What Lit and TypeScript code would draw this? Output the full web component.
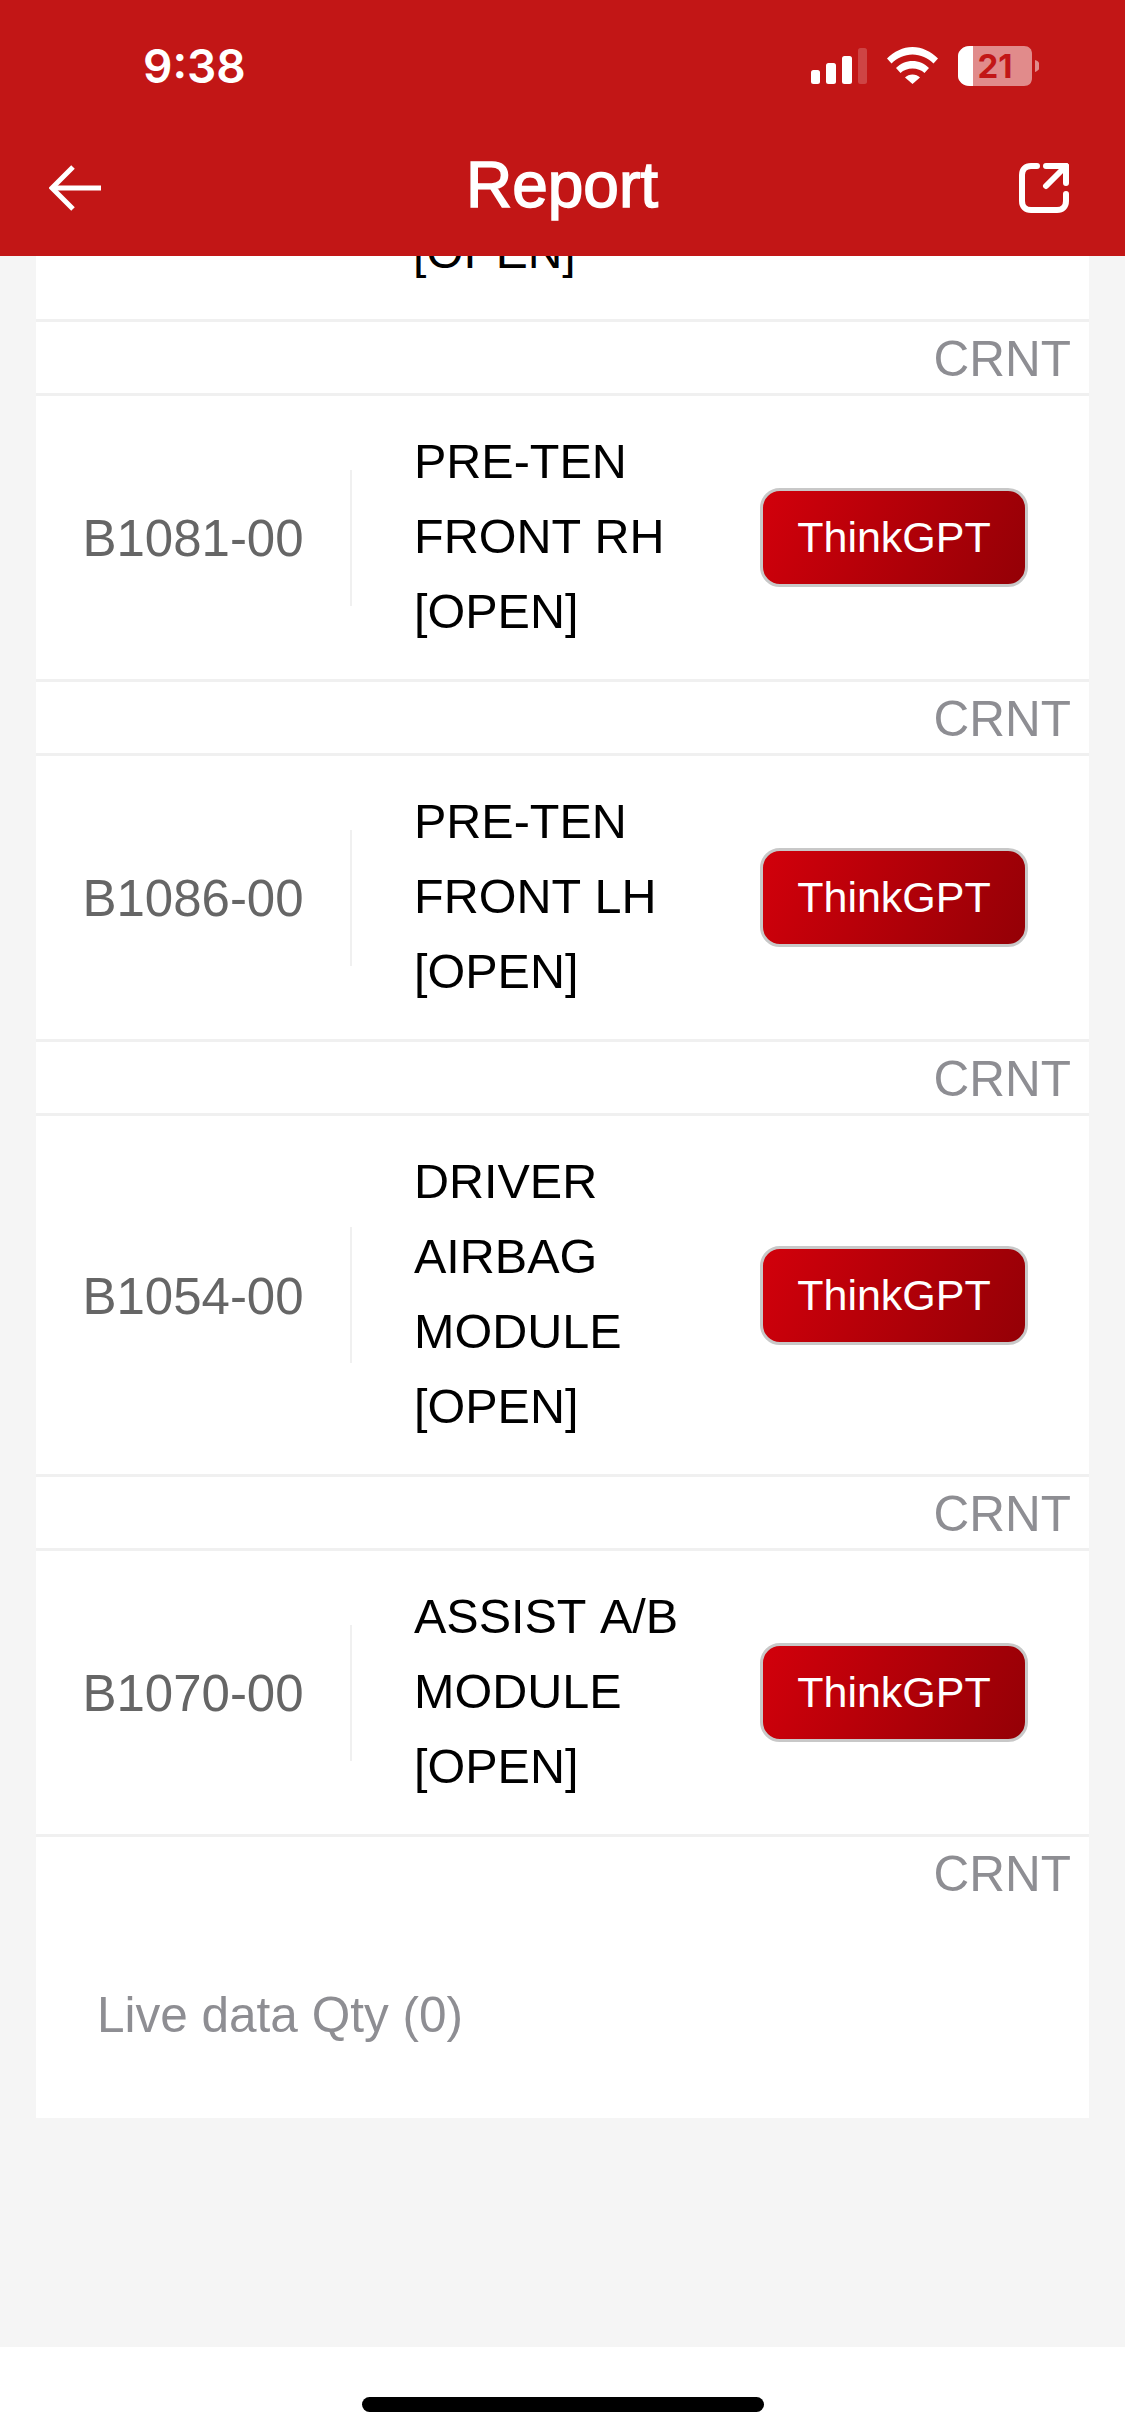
import { LitElement, html, css } from "lit";
import { customElement } from "lit/decorators.js";

const rows = [
  { code: "B1081-00", lines: ["PRE-TEN", "FRONT RH", "[OPEN]"] },
  { code: "B1086-00", lines: ["PRE-TEN", "FRONT LH", "[OPEN]"] },
  { code: "B1054-00", lines: ["DRIVER", "AIRBAG", "MODULE", "[OPEN]"] },
  { code: "B1070-00", lines: ["ASSIST A/B", "MODULE", "[OPEN]"] },
];

@customElement("app-root")
export class AppRoot extends LitElement {
  static styles = css`
    :host {
      display: flex;
      flex-direction: column;
      width: 1125px;
      height: 2436px;
      overflow: hidden;
      background: #f5f5f5;
      font-family: "Liberation Sans", Arial, sans-serif;
    }
    .header {
      flex: none;
      height: 256px;
      background: #c21616;
      color: #fff;
      display: flex;
      flex-direction: column;
    }
    .status {
      height: 132px;
      display: flex;
      align-items: center;
      justify-content: space-between;
      padding: 0 86px 0 143px;
    }
    .time {
      font-family: Inter, sans-serif;
      font-weight: 600;
      font-size: 46px;
      line-height: 1;
    }
    .status svg { display: block; }
    .batt-num {
      font-family: Inter, sans-serif;
      font-weight: 700;
      font-size: 33px;
    }
    .nav {
      height: 112px;
      display: grid;
      grid-template-columns: 1fr auto 1fr;
      align-items: center;
      padding: 0 56px 0 49px;
    }
    .nav svg { display: block; }
    .nav .share { justify-self: end; }
    .title {
      font-size: 64px;
      line-height: 1;
      font-weight: 400;
      margin: 0 0 6px 6px;
      -webkit-text-stroke: 1.5px #fff;
    }
    .main {
      flex: 1;
      min-height: 0;
      overflow: hidden;
      padding: 0 36px;
    }
    .card { background: #fff; }
    .cut {
      height: 63px;
      overflow: hidden;
      display: flex;
      flex-direction: column;
      justify-content: flex-end;
      padding-left: 377px;
      padding-bottom: 30px;
      box-sizing: border-box;
      font-size: 48px;
      line-height: 75px;
      color: #000;
    }
    .cut span { flex: none; }
    .sep { height: 3px; background: #f0f0f0; }
    .crnt {
      box-sizing: border-box;
      height: 71px;
      display: flex;
      align-items: center;
      justify-content: flex-end;
      padding: 2px 18px 0 0;
      font-size: 49.5px;
      color: #8e8e93;
    }
    .row {
      display: flex;
      align-items: center;
      padding: 29px 0;
    }
    .code {
      width: 314px;
      flex: none;
      box-sizing: border-box;
      padding-top: 2px;
      text-align: center;
      font-size: 51px;
      color: #666;
    }
    .vline {
      flex: none;
      width: 2px;
      height: 136px;
      background: #f0f0f0;
    }
    .desc {
      width: 346px;
      flex: none;
      margin: -1.5px 0 1.5px 62px;
      font-size: 48.5px;
      font-kerning: none;
      line-height: 75px;
      color: #000;
    }
    .btn {
      flex: none;
      box-sizing: border-box;
      width: 268px;
      height: 99px;
      border: 3px solid #c8c8c8;
      border-radius: 20px;
      background: linear-gradient(115deg, #d2000b, #940006);
      color: #fff;
      font-family: inherit;
      font-size: 43px;
      padding: 0;
      display: flex;
      align-items: center;
      justify-content: center;
    }
    .live {
      box-sizing: border-box;
      height: 210px;
      display: flex;
      align-items: center;
      padding: 2px 0 0 61px;
      font-size: 49.5px;
      color: #8e8e93;
    }
    .footer {
      flex: none;
      height: 89px;
      background: #fff;
      display: flex;
      justify-content: center;
      padding-top: 50px;
      box-sizing: border-box;
    }
    .home {
      width: 402px;
      height: 15px;
      border-radius: 8px;
      background: #000;
    }
  `;

  render() {
    return html`
      <div class="header">
        <div class="status">
          <span class="time">9:38</span>
          <svg width="228" height="40" viewBox="811 46 228 40">
            <g fill="#fff">
              <rect x="811" y="70" width="9" height="14" rx="2.5" />
              <rect x="826" y="63" width="10" height="21" rx="2.5" />
              <rect x="842" y="56" width="10" height="28" rx="2.5" />
              <rect x="858" y="48" width="9" height="36" rx="2.5" opacity=".2" />
              <path d="M887 58.5C894 51.5 903 47 912.5 47S931 51.5 938 58.5L933.5 63.5C928 58 920.5 54.5 912.5 54.5S897 58 891.5 63.5Z" />
              <path d="M896 68C900.500 63.500 906.300 61 912.500 61S924.500 63.500 929 68L924.500 73C921.500 70 917 68.500 912.500 68.500S903.500 70 900.500 73Z" />
              <path d="M905 77.500C907 75.500 909.500 74.500 912.500 74.500S918 75.500 920 77.500L912.500 84Z" />
              <path d="M970 46H1024C1029 46 1032 49 1032 54V78C1032 83 1029 86 1024 86H970C963 86 958 81 958 76V56C958 51 963 46 970 46Z" opacity=".5" />
              <path d="M973 46V86H970C963 86 958 81 958 76V56C958 51 963 46 970 46Z" />
              <path d="M1035 60C1038 61 1040 63 1040 66S1038 71 1035 72Z" opacity=".5" />
            </g>
            <text class="batt-num" x="995" y="78" text-anchor="middle" fill="#c21616">21</text>
          </svg>
        </div>
        <div class="nav">
          <svg width="52" height="46" viewBox="0 0 52 46" fill="none" stroke="#fff" stroke-width="5">
            <path d="M24 2 3 23 24 44" />
            <path d="M3 23H52" />
          </svg>
          <span class="title">Report</span>
          <svg class="share" width="50" height="50" viewBox="0 0 50 50" fill="none" stroke="#fff" stroke-width="6" stroke-linecap="round" stroke-linejoin="round">
            <path d="M18 3H12C6.500 3 3 6.500 3 12V38C3 43.500 6.500 47 12 47H38C43.500 47 47 43.500 47 38V31" />
            <path d="M27 3H47V20" />
            <path d="M47 3 27 23" />
          </svg>
        </div>
      </div>
      <div class="main">
        <div class="card">
          <div class="cut"><span>[OPEN]</span></div>
          ${rows.map(
            (r) => html`
              <div class="sep"></div>
              <div class="crnt">CRNT</div>
              <div class="sep"></div>
              <div class="row">
                <div class="code">${r.code}</div>
                <div class="vline"></div>
                <div class="desc">${r.lines.map((l) => html`<div>${l}</div>`)}</div>
                <button class="btn">ThinkGPT</button>
              </div>
            `
          )}
          <div class="sep"></div>
          <div class="crnt">CRNT</div>
          <div class="live">Live data Qty (0)</div>
        </div>
      </div>
      <div class="footer"><div class="home"></div></div>
    `;
  }
}
